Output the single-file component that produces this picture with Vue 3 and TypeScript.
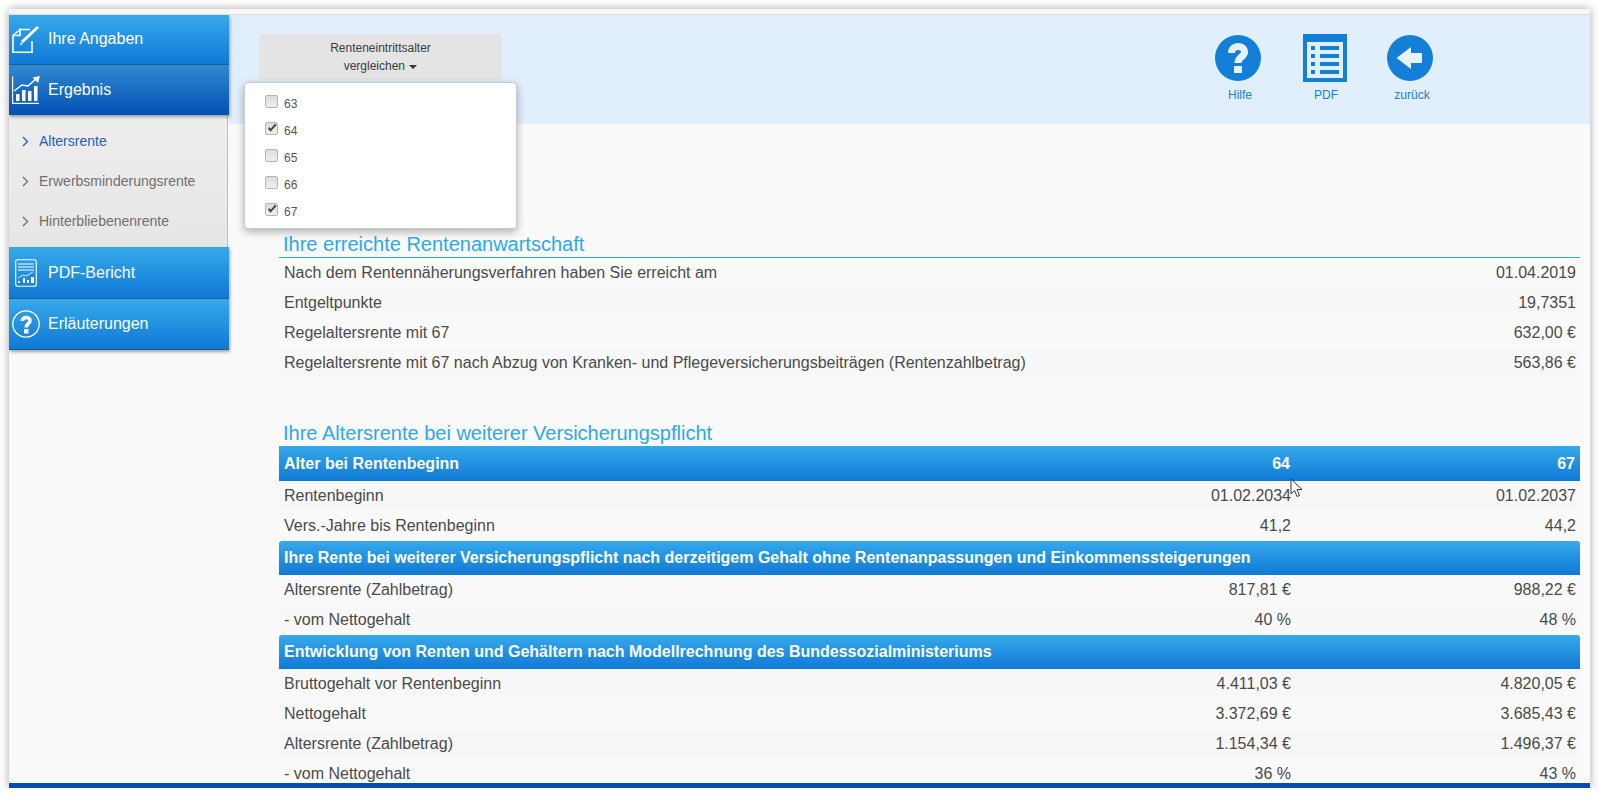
<script setup lang="ts">
import { ref } from 'vue'

interface Row {
  label: string
  a: string
  b: string
}

const ages = ref([
  { age: 63, checked: false },
  { age: 64, checked: true },
  { age: 65, checked: false },
  { age: 66, checked: false },
  { age: 67, checked: true },
])

const subItems = ['Altersrente', 'Erwerbsminderungsrente', 'Hinterbliebenenrente']

const reached = [
  { label: 'Nach dem Rentennäherungsverfahren haben Sie erreicht am', value: '01.04.2019' },
  { label: 'Entgeltpunkte', value: '19,7351' },
  { label: 'Regelaltersrente mit 67', value: '632,00 €' },
  { label: 'Regelaltersrente mit 67 nach Abzug von Kranken- und Pflegeversicherungsbeiträgen (Rentenzahlbetrag)', value: '563,86 €' },
]

const groupA: Row[] = [
  { label: 'Rentenbeginn', a: '01.02.2034', b: '01.02.2037' },
  { label: 'Vers.-Jahre bis Rentenbeginn', a: '41,2', b: '44,2' },
]
const groupB: Row[] = [
  { label: 'Altersrente (Zahlbetrag)', a: '817,81 €', b: '988,22 €' },
  { label: '- vom Nettogehalt', a: '40 %', b: '48 %' },
]
const groupC: Row[] = [
  { label: 'Bruttogehalt vor Rentenbeginn', a: '4.411,03 €', b: '4.820,05 €' },
  { label: 'Nettogehalt', a: '3.372,69 €', b: '3.685,43 €' },
  { label: 'Altersrente (Zahlbetrag)', a: '1.154,34 €', b: '1.496,37 €' },
  { label: '- vom Nettogehalt', a: '36 %', b: '43 %' },
]
</script>

<template>
  <div class="frame">
    <div class="strip"></div>
    <div class="body">
      <aside class="sidebar">
        <a class="nav first">
          <svg class="nav-icon" viewBox="0 0 28 28" fill="none" stroke="#fff" stroke-width="1.6">
            <path d="M8 4.5h10M20 16v11.2H1V10.5L8 4.5v6H1" />
            <path d="M10 17 L26 2" stroke-width="3" />
            <path d="M8 20l1-3 2 2z" fill="#fff" stroke="none" />
          </svg>
          Ihre Angaben
        </a>
        <a class="nav active">
          <svg class="nav-icon" viewBox="0 0 28 28" fill="none" stroke="#fff">
            <path d="M.6 0v27.4H27" stroke-width="1.2" />
            <path d="M4 25v-7h3.5v7zM10 25V14h3.5v11zM16 25V15h3.5v10zM22 25V10h3.5v15z" fill="#fff" stroke="none" />
            <path d="M2 15 L10 9 L16 10 L25 2" stroke-width="1.4" />
            <path d="M20.5 1.5 L28 0 L26 7z" fill="#fff" stroke="none" />
          </svg>
          Ergebnis
        </a>
        <ul class="sub">
          <li v-for="(item, i) in subItems" :key="item" :class="{ current: i === 0 }">
            <svg class="chev" viewBox="0 0 7 11" fill="none" stroke="currentColor" stroke-width="1.3">
              <path d="M1 1l4.5 4.5L1 10" />
            </svg>
            {{ item }}
          </li>
        </ul>
        <a class="nav lower">
          <svg class="nav-icon" viewBox="0 0 22 28" fill="none" stroke="#fff">
            <rect x="0.7" y="0.7" width="20.6" height="26.6" rx="2" stroke-width="1.1" />
            <path d="M3 5h16M3 8h16M3 11h16" stroke-width="1" />
            <path d="M3 24v-2h2v2zM8 24v-5h2v5zM12 24v-3h2v3zM16 24v-6h3v6z" fill="#fff" stroke="none" />
            <path d="M3 19l5-3 3 1 7-4" stroke-width=".8" />
          </svg>
          PDF-Bericht
        </a>
        <a class="nav last">
          <svg class="nav-icon" viewBox="0 0 28 28" fill="none" stroke="#fff">
            <circle cx="14" cy="14" r="13.2" stroke-width="1.3" />
            <path d="M10.3 11C10.3 6.5 18 6.5 18 10.5C18 13.5 14.3 13.5 14.3 17.5" stroke-width="3.6" />
            <path d="M12 19.2h4.5v4.3H12z" fill="#fff" stroke="none" />
          </svg>
          Erläuterungen
        </a>
      </aside>

      <main class="main">
        <header class="band">
          <div class="compare">
            <button class="compare-btn" type="button">
              Renteneintrittsalter<br />vergleichen <span class="caret"></span>
            </button>
            <div class="menu">
              <label v-for="item in ages" :key="item.age" class="menu-item">
                <span class="box">
                  <svg v-if="item.checked" viewBox="0 0 12 12" width="10" height="10">
                    <path d="M1 6.5l3.2 4L11.5 2.5 9.5 1 4.5 7 3 4.8z" fill="#444" />
                  </svg>
                </span>
                <span class="num">{{ item.age }}</span>
              </label>
            </div>
          </div>
          <nav class="actions">
            <a class="action">
              <svg class="round" width="46" height="46" viewBox="0 0 46 46" fill="none">
                <circle cx="23" cy="23" r="23" fill="#147fd6" />
                <path d="M16.5 18C16.5 9.5 29.5 9.5 29.5 17C29.5 22 23 21.5 23 28" stroke="#e8f2fc" stroke-width="7" />
                <path d="M19 31h8v7h-8z" fill="#e8f2fc" />
              </svg>
              Hilfe
            </a>
            <a class="action">
              <svg class="sheet" width="44" height="48" viewBox="0 0 44 48">
                <rect width="44" height="48" fill="#147fd6" />
                <rect x="4" y="8" width="36" height="36" fill="#e1eefb" />
                <path d="M8 12h4v4H8zM17 12h19v4H17zM8 20h4v4H8zM17 20h19v4H17zM8 28h4v4H8zM17 28h19v4H17zM8 36h4v4H8zM17 36h19v4H17z" fill="#147fd6" />
              </svg>
              PDF
            </a>
            <a class="action">
              <svg class="round" width="46" height="46" viewBox="0 0 46 46">
                <circle cx="23" cy="23" r="23" fill="#147fd6" />
                <path d="M9.5 23L24 12v6h11v10H24v6z" fill="#e8f2fc" />
              </svg>
              zurück
            </a>
          </nav>
        </header>

        <section class="content">
          <h2 class="heading underlined">Ihre erreichte Rentenanwartschaft</h2>
          <div v-for="row in reached" :key="row.label" class="row simple">
            <span class="label">{{ row.label }}</span>
            <span class="value">{{ row.value }}</span>
          </div>

          <h2 class="heading second">Ihre Altersrente bei weiterer Versicherungspflicht</h2>
          <div class="bar top">
            <span class="label">Alter bei Rentenbeginn</span>
            <span class="value">64</span>
            <span class="value">67</span>
          </div>
          <div v-for="row in groupA" :key="row.label" class="row">
            <span class="label">{{ row.label }}</span>
            <span class="value">{{ row.a }}</span>
            <span class="value">{{ row.b }}</span>
          </div>
          <div class="bar">
            <span class="label">Ihre Rente bei weiterer Versicherungspflicht nach derzeitigem Gehalt ohne Rentenanpassungen und Einkommenssteigerungen</span>
          </div>
          <div v-for="row in groupB" :key="row.label" class="row">
            <span class="label">{{ row.label }}</span>
            <span class="value">{{ row.a }}</span>
            <span class="value">{{ row.b }}</span>
          </div>
          <div class="bar">
            <span class="label">Entwicklung von Renten und Gehältern nach Modellrechnung des Bundessozialministeriums</span>
          </div>
          <div v-for="row in groupC" :key="row.label" class="row">
            <span class="label">{{ row.label }}</span>
            <span class="value">{{ row.a }}</span>
            <span class="value">{{ row.b }}</span>
          </div>
        </section>
      </main>
    </div>
    <div class="footer"></div>

    <!-- mouse pointer captured in the screenshot -->
    <svg class="pointer" width="14" height="20" viewBox="0 0 14 20">
      <path d="M1 1v15l3.5-3.5 2.5 6 2.5-1-2.5-6H12z" fill="#fff" stroke="#333" stroke-width="1" />
    </svg>
  </div>
</template>

<style>
html,
body {
  margin: 0;
  background: #fff;
  overflow: hidden;
}
</style>

<style scoped>
.frame {
  position: relative;
  box-sizing: border-box;
  width: 1581px;
  height: 779px;
  margin: 9px 0 0 9px;
  display: flex;
  flex-direction: column;
  background: #fafafa;
  box-shadow: 0 0 9px rgba(0, 0, 0, 0.35);
  font-family: 'Liberation Sans', Arial, sans-serif;
  color: #4a4a4a;
  overflow: hidden;
}

.strip {
  height: 5px;
  background: #f8f7f5;
  border-bottom: 1px solid #dcdcdc;
}

.body {
  flex: 1;
  min-height: 0;
  display: flex;
  overflow: hidden;
}

.footer {
  height: 5px;
  background: #034eb0;
}

/* sidebar */
.sidebar {
  width: 220px;
  flex-shrink: 0;
  position: relative;
  z-index: 1;
}

.nav {
  display: flex;
  align-items: center;
  height: 49px;
  padding-left: 3px;
  gap: 8px;
  color: #fff;
  font-size: 16px;
  background: linear-gradient(#36a9ea, #1079d6);
  border-bottom: 1px solid #1f5f8f;
  box-shadow: 1px 2px 3px rgba(0, 0, 0, 0.35);
  position: relative;
}

.nav.first {
  height: 47px;
  padding-bottom: 2px;
}

.nav.active {
  height: 50px;
  background: linear-gradient(#2f8ad2, #034fb3);
  border-bottom: 0;
}

.nav.lower {
  height: 51px;
}

.nav.last {
  height: 50px;
}

.nav-icon {
  width: 28px;
  height: 28px;
  flex-shrink: 0;
}

.sub {
  list-style: none;
  margin: 0;
  padding: 6px 0 0;
  width: 219px;
  height: 132px;
  box-sizing: border-box;
  background: linear-gradient(#eeeeee, #e6e6e6);
  border-right: 1px solid #bbb;
}

.sub li {
  display: flex;
  align-items: center;
  height: 40px;
  padding-left: 13px;
  gap: 10px;
  font-size: 14px;
  color: #6f6f6f;
}

.sub li.current {
  color: #1d5fb8;
}

.chev {
  width: 7px;
  height: 11px;
}

/* main */
.main {
  flex: 1;
  min-width: 0;
}

.band {
  display: flex;
  height: 109px;
  padding: 19px 0 0 30px;
  box-sizing: border-box;
  background: #e1eefb;
}

.compare {
  position: relative;
  width: 243px;
}

.compare-btn {
  display: block;
  width: 100%;
  height: 46px;
  padding: 0;
  border: 0;
  border-radius: 4px;
  background: #e4e4e4;
  color: #3c3c3c;
  font: 12px/18px 'Liberation Sans', Arial, sans-serif;
  text-align: center;
}

.caret {
  display: inline-block;
  margin-left: 1px;
  vertical-align: middle;
  border-top: 4px solid #333;
  border-left: 4px solid transparent;
  border-right: 4px solid transparent;
}

.menu {
  position: absolute;
  left: -15px;
  top: 48px;
  width: 273px;
  height: 147px;
  box-sizing: border-box;
  padding: 6px 0 0 20px;
  background: #fff;
  border: 1px solid #c4ccd4;
  border-radius: 4px;
  box-shadow: 0 3px 8px rgba(0, 0, 0, 0.3);
  z-index: 2;
}

.menu-item {
  display: flex;
  align-items: center;
  height: 27px;
  font-size: 12px;
  color: #555;
}

.box {
  display: flex;
  align-items: center;
  justify-content: center;
  width: 11px;
  height: 11px;
  margin: -3px 6px 0 0;
  border: 1px solid #b4b4b4;
  border-radius: 2px;
  background: linear-gradient(#dcdcdc, #efefef);
}

.num {
  margin-top: 2px;
}

.actions {
  display: flex;
  margin-left: 695px;
}

.action {
  display: flex;
  flex-direction: column;
  align-items: center;
  width: 86px;
  color: #1a7fd6;
  font-size: 12px;
  line-height: 14px;
}

.round {
  margin: 1px 5px 7px 0;
}

.sheet {
  margin: 0 2px 6px 0;
}

.content {
  padding: 108px 10px 0 50px;
}

.heading {
  margin: 0;
  padding-left: 4px;
  font-size: 20px;
  font-weight: normal;
  line-height: 25px;
  color: #2ca9ec;
}

.underlined {
  border-bottom: 1px solid #2ca9ec;
}

.second {
  margin-top: 43px;
  height: 25px;
}

.row,
.bar {
  display: flex;
  align-items: center;
  box-sizing: border-box;
  padding-left: 5px;
}

.row {
  height: 30px;
  font-size: 16px;
}

.row:nth-of-type(even) {
  background: #f8f8f8;
}

.bar {
  height: 34px;
  color: #fff;
  font-size: 16px;
  font-weight: bold;
  border-radius: 3px 3px 0 0;
  background: linear-gradient(#36a9ea, #1079d6);
}

.bar.top {
  height: 35px;
  border-radius: 0;
}

.label {
  flex: 1;
  white-space: nowrap;
}

.value {
  width: 285px;
  padding-right: 5px;
  box-sizing: border-box;
  text-align: right;
}

.row .value {
  padding-right: 4px;
}

.simple .value {
  width: auto;
}

.pointer {
  position: absolute;
  left: 1281px;
  top: 469px;
}
</style>
